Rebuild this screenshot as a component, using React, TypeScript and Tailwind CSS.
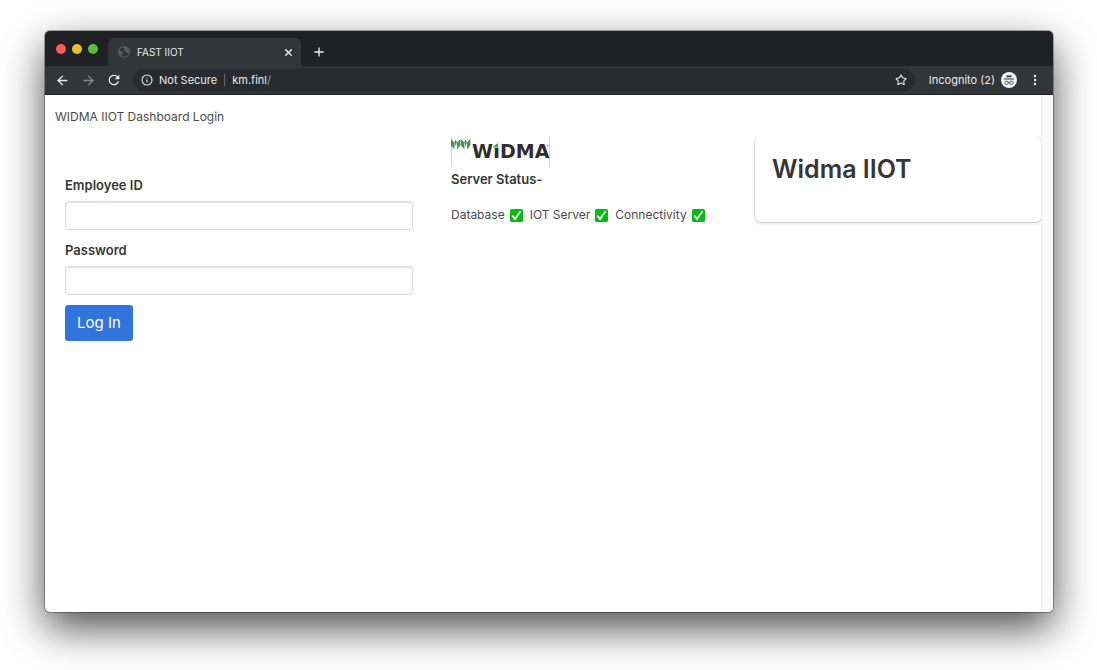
import { ArrowLeft, ArrowRight, Info, Plus, Star, X } from "lucide-react";

function GlobeIcon() {
  return (
    <svg viewBox="0 0 12 12" className="size-3 shrink-0" aria-hidden="true">
      <circle cx="6" cy="6" r="5.4" fill="#303437" stroke="#565b5e" strokeWidth="1.2" />
      <path d="M1 4.5 3.4 5 5.2 6.6 4.8 8.2 3.8 8.8 3.6 11C1.5 9.8.6 7.5 1 4.5Z" fill="#565b5e" />
      <path d="M5 1 7.6.9C9.6 1.7 11 3.2 11.2 5.6L9.7 7 8 6.4 7.2 5 5.3 4.4 6.4 3Z" fill="#565b5e" />
    </svg>
  );
}

function ReloadIcon() {
  return (
    <svg viewBox="0 0 24 24" className="size-4" fill="currentColor" aria-hidden="true">
      <path d="M17.65 6.35A7.96 7.96 0 0 0 12 4a8 8 0 1 0 7.73 10h-2.08A6 6 0 1 1 12 6c1.66 0 3.14.69 4.22 1.78L13 11h7V4l-2.35 2.35Z" />
    </svg>
  );
}

function IncognitoIcon() {
  return (
    <svg viewBox="0 0 16 16" className="size-4" aria-hidden="true">
      <circle cx="8" cy="8" r="8" fill="#f1f3f4" />
      <path d="M5.2 5.2 5.9 3.2 8 3.5 10.1 3.2 10.8 5.2Z" fill="#35393c" />
      <path d="M3 7h10" stroke="#35393c" strokeWidth="1" />
      <g fill="none" stroke="#35393c" strokeWidth="0.8">
        <circle cx="5.6" cy="10.8" r="1.7" />
        <circle cx="10.4" cy="10.8" r="1.7" />
        <path d="M7.3 10.5q.7-.5 1.4 0" />
      </g>
    </svg>
  );
}

function WidmaLogo() {
  return (
    <svg viewBox="0 0 100 30" className="h-[30px] w-[100px]" role="img" aria-label="Widma">
      <path d="M.5 0v30M98.5 0v30" stroke="#d2d2d2" />
      <g fill="#459653">
        <path d="M0 2 3.4 5.5V12.5L0 8.5ZM9.4 2 6 5.5V12.5L9.4 8.5ZM4.7 2.5 6 5 4.7 9.5 3.4 5Z" />
        <path d="M10 2 13.4 5.5V12.5L10 8.5ZM19.4 2 16 5.5V12.5L19.4 8.5ZM14.7 2.5 16 5 14.7 9.5 13.4 5Z" />
      </g>
      <text x="21" y="21" fill="#2f2d2e" className="font-['DejaVu_Sans'] text-[19px] font-bold">
        WIDMA
      </text>
      <path d="M42 5h6v6h-6Z" fill="#fff" />
      <path d="M42.5 9.5 47 6V10.5H42.5Z" fill="#459653" />
      <circle cx="96.5" cy="8.5" r=".8" fill="#777" />
    </svg>
  );
}

function CheckMark() {
  return (
    <svg viewBox="0 0 13 13" className="size-[13px] shrink-0" role="img" aria-label="OK">
      <rect width="13" height="13" rx="1.8" fill="#07bb10" />
      <path d="M2.7 7.1 5 10 10.2 2.8" fill="none" stroke="#fff" strokeWidth="1.8" strokeLinecap="round" />
    </svg>
  );
}

function Field({ id, label, type }: { id: string; label: string; type: string }) {
  return (
    <div className="flex flex-col">
      <label htmlFor={id} className="mb-[6px] text-[13px] font-semibold text-[#363636]">
        {label}
      </label>
      <input
        id={id}
        type={type}
        className="h-[29px] w-full rounded-[3px] border border-[#dbdbdb] bg-white px-2 shadow-[inset_0_1px_2px_rgba(10,10,10,0.1)] outline-none"
      />
    </div>
  );
}

const services = ["Database", "IOT Server", "Connectivity"];

export default function App() {
  return (
    <div className="flex min-h-screen flex-col overflow-hidden bg-white pt-[31px] pr-11 pb-[58px] pl-[45px] font-['Inter',sans-serif]">
      <div className="flex grow flex-col overflow-hidden rounded-[5px] bg-white shadow-[0_0_0_1px_rgba(0,0,0,0.3),0_16px_42px_rgba(0,0,0,0.7)]">
        <header className="border-b border-[#1f2124] bg-[#323639] text-[#e8eaed]">
          <div className="flex h-[35px] items-end bg-[#202124]">
            <div className="flex items-center gap-[6px] self-center pl-[11px]">
              <span className="size-[10px] rounded-full bg-[#fc5b57]" />
              <span className="size-[10px] rounded-full bg-[#e5bf2c]" />
              <span className="size-[10px] rounded-full bg-[#57c038]" />
            </div>
            <div className="ml-[10px] flex h-7 w-[193px] items-center rounded-t-md bg-[#323639] px-[10px]">
              <GlobeIcon />
              <span className="ml-[7px] grow text-[10px]">FAST IIOT</span>
              <button type="button" aria-label="Close tab" className="-mr-[3px]">
                <X className="size-[11px]" strokeWidth={3} />
              </button>
            </div>
            <button type="button" aria-label="New tab" className="ml-[11px] flex h-7 items-center">
              <Plus className="size-[14px]" strokeWidth={2.4} />
            </button>
          </div>
          <nav className="flex h-7 items-center pr-4 pl-[10px]" aria-label="Browser">
            <button type="button" aria-label="Back">
              <ArrowLeft className="size-[15px]" strokeWidth={2.2} />
            </button>
            <button type="button" aria-label="Forward" className="ml-[11px] text-[#85888b]">
              <ArrowRight className="size-[15px]" strokeWidth={2.2} />
            </button>
            <button type="button" aria-label="Reload" className="ml-[10px]">
              <ReloadIcon />
            </button>
            <div className="ml-[11px] flex h-[22px] grow items-center rounded-full bg-[#282c2f] pr-2 pl-2 text-[11px]">
              <Info className="size-3" strokeWidth={2.2} />
              <span className="ml-[6px]">Not Secure</span>
              <span className="mx-[7px] h-3 w-px bg-[#686b6e]" />
              <span className="grow">
                km.finl<span className="text-[#9aa0a6]">/</span>
              </span>
              <button type="button" aria-label="Bookmark">
                <Star className="size-3" strokeWidth={2.2} />
              </button>
            </div>
            <span className="ml-[14px] text-[11px]">Incognito (2)</span>
            <span className="ml-[6px]">
              <IncognitoIcon />
            </span>
            <button type="button" aria-label="Menu" className="ml-4">
              <svg viewBox="0 0 4 12" className="h-3 w-1" fill="currentColor" aria-hidden="true">
                <circle cx="2" cy="2" r="1.2" />
                <circle cx="2" cy="6" r="1.2" />
                <circle cx="2" cy="10" r="1.2" />
              </svg>
            </button>
          </nav>
        </header>

        <div className="flex grow">
          <main className="grow pt-3 pl-[10px] text-[12px] leading-5 text-[#4a4a4a]">
            <p>WIDMA IIOT Dashboard Login</p>
            <div className="mt-[10px] grid grid-cols-[396fr_304fr_286fr] items-start">
              <form className="flex flex-col gap-[10px] pt-[38px] pr-[38px] pl-[10px]">
                <Field id="employee-id" label="Employee ID" type="text" />
                <Field id="password" label="Password" type="password" />
                <button
                  type="submit"
                  className="h-9 w-[68px] rounded-[3px] bg-[#3273dc] text-[15px] text-white"
                >
                  Log In
                </button>
              </form>
              <section>
                <WidmaLogo />
                <h2 className="mt-[2px] text-[13px] font-semibold text-[#363636]">Server Status-</h2>
                <ul className="mt-4 flex gap-[7px] whitespace-nowrap">
                  {services.map((name) => (
                    <li key={name} className="flex items-center gap-[5px]">
                      {name}
                      <CheckMark />
                    </li>
                  ))}
                </ul>
              </section>
              <section className="h-[85px] rounded-[5px] px-[17px] pt-4 shadow-[0_2px_3px_rgba(10,10,10,0.1),0_0_0_1px_rgba(10,10,10,0.1)] [clip-path:inset(0_0_-6px_-2px)]">
                <h1 className="text-[25px] leading-8 font-semibold text-[#363636]">Widma IIOT</h1>
              </section>
            </div>
          </main>
          <div className="w-3 shrink-0 border-l border-[#ebebeb] bg-[#fafafa]" />
        </div>
      </div>
    </div>
  );
}
